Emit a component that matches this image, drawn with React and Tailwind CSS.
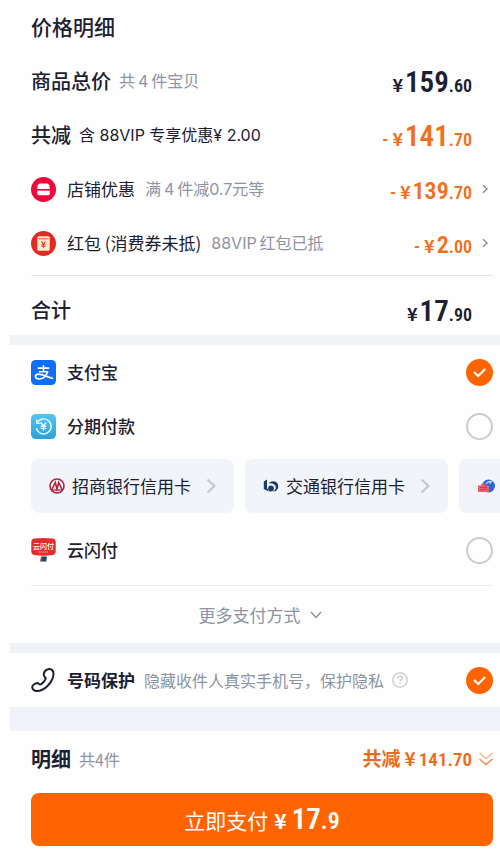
import React, { useState } from 'react';

const YEN = '¥';

const Amount = ({ minus, whole, cents, size }) => {
  const big = size === 'lg' ? 'text-[29px]' : 'text-[24px]';

  return (
    <span className="flex items-baseline pt-[6px] font-['Roboto_Condensed','Roboto',sans-serif] text-[18px] font-semibold leading-8">
      {minus && <span className="mr-1">-</span>}
      <span className="mr-[2px] font-['Noto_Sans_CJK_SC',sans-serif] text-[18px] font-bold leading-none">{YEN}</span>
      <span className={big}>{whole}</span>
      <span>.{cents}</span>
    </span>
  );
};

const Chevron = ({ className }) => (
  <svg viewBox="0 0 10 16" fill="none" stroke="currentColor" strokeWidth="2" className={className}>
    <path d="M1.5 1.5 8.5 8l-7 6.5" />
  </svg>
);

const Check = ({ type, ...props }) => (
  <span className="grid size-[27px] shrink-0">
    <input
      type={type}
      className="peer col-start-1 row-start-1 size-[27px] appearance-none rounded-full border-2 border-[#c9ccd3] checked:border-0 checked:bg-[#ff6400]"
      {...props}
    />
    <svg
      viewBox="0 0 27 27"
      fill="none"
      stroke="white"
      strokeWidth="2.2"
      className="pointer-events-none invisible col-start-1 row-start-1 peer-checked:visible"
    >
      <path d="m8 13 4.200 4 7-7" />
    </svg>
  </span>
);

const ShopIcon = () => (
  <svg viewBox="0 0 24 24" className="size-[25px]">
    <circle cx="12" cy="12" r="12" fill="#f0073c" />
    <path d="M8.5 6.2h7q1.500 0 2 1.800l.7 3.500H5.800L6.500 8q.5-1.800 2-1.800z" fill="#fff" />
    <path d="M6 12.800q1 1 2 0 1 1 2 0 1 1 2 0 1 1 2 0 1 1 2 0 1 1 2 0V16q0 1.500-1.500 1.500h-9Q6 17.500 6 16z" fill="#fff" />
  </svg>
);

const RedPacketIcon = () => (
  <svg viewBox="0 0 24 24" className="size-[25px]">
    <circle cx="12" cy="12" r="12" fill="#e32a22" />
    <rect x="6" y="5" width="12" height="14" rx="1.5" fill="#fde8cd" />
    <path d="M7 7.500h10" stroke="#e5583c" strokeWidth="1" />
    <path d="m10 10 2 2.500 2-2.500M12 12.500V16M10 12.800h4M10 14.500h4" stroke="#dd3b28" strokeWidth="1" fill="none" />
  </svg>
);

const AlipayIcon = () => (
  <svg viewBox="0 0 24 24" className="size-[25px]" fill="none" stroke="#fff">
    <rect width="24" height="24" rx="4.5" fill="#0d6efa" stroke="none" />
    <path d="M6.500 7.800h11M12 5v6M7.500 11.200h9" strokeWidth="1.5" />
    <path d="M16 11.200c-1.400 4-4.500 7-8.200 7-2.200 0-3.500-.9-3.500-2.300s1.300-2.300 3-2.300c3.200 0 7.500 2.400 14 4.200" strokeWidth="1.6" />
  </svg>
);

const InstallmentIcon = () => (
  <svg viewBox="0 0 24 24" className="size-[25px]" fill="none" stroke="#e8f8ff">
    <defs>
      <linearGradient id="sky" x1="0" y1="0" x2="0" y2="1">
        <stop offset="0" stopColor="#55c5ee" />
        <stop offset="1" stopColor="#2f9fdb" />
      </linearGradient>
    </defs>
    <rect width="24" height="24" rx="4.5" fill="url(#sky)" stroke="none" />
    <path d="M6 8.200a7.200 7.200 0 1 1-.8 5.500" strokeWidth="1.4" />
    <path d="M5.500 5v4h4" strokeWidth="1.2" />
    <path d="m9.500 8 2.500 3.500L14.500 8M12 11.500V16M9.300 11.800h5.400M9.300 13.800h5.400" strokeWidth="1.3" />
  </svg>
);

const UnionPayIcon = () => (
  <svg viewBox="0 0 25 24" className="h-6 w-[25px]">
    <path d="M3 .5Q12.500-.5 22 .5q2.500.3 2.700 3V14q-.2 2.500-2.700 3-9.500 1.500-19 0-2.500-.5-2.700-3V3.500Q.5.800 3 .5z" fill="#e52c2d" />
    <text x="12.500" y="11" textAnchor="middle" fill="#fff" fontSize="7" fontWeight="500">云闪付</text>
    <path d="M7.500 14h10" stroke="#fff" strokeWidth="1" strokeDasharray="1.500 .5" opacity=".6" />
    <path d="M10 18.500h2l-.8 5H9z" fill="#d33" />
    <path d="M11.500 18.500h4.500l-.8 5h-4.700z" fill="#174a63" />
  </svg>
);

const PhoneIcon = () => (
  <svg viewBox="0 0 24 24" className="size-6" fill="none" stroke="#1c2030" strokeWidth="2" strokeLinejoin="round">
    <path d="M17 1.300c3-.8 5.500 1 5.500 4.200 0 4.500-2.500 9-6 12.500-3.300 3.200-7 5-10.500 5-3 0-5-2-4.700-4.300.2-1.600 1.500-2.300 3-3 1.800-.9 2.700-.9 3.700.2.800.9 1.500.7 2.500 0 1.600-1.200 2.900-2.700 3.900-4.500.5-1 .4-1.700-.5-2.300-1.300-1-1.300-2.200-1-3.700.5-2.200 2-3.600 4.100-4.100z" />
  </svg>
);

const CmbIcon = () => (
  <svg viewBox="0 0 16 16" className="size-4" fill="none">
    <circle cx="8" cy="8" r="7" stroke="#b5213c" strokeWidth="1.6" />
    <path d="M3 11.500 6.300 4.500 8 11l1.700-6.500 3.300 7" stroke="#b5213c" strokeWidth="1.6" />
    <path d="M2 12h12" stroke="#b5213c" strokeWidth="1.3" />
  </svg>
);

const BocomIcon = () => (
  <svg viewBox="0 0 16 16" className="size-4">
    <path d="M.8 3.500 4 1.500v8.500l2 3.500L.8 11z" fill="#1d3c6b" />
    <path d="M5.500 5.500C9 1.800 15 3 15.300 8c0 2.500-1 4-2.800 5.300h-2.500c2-1 3-2.500 2.800-4.300C12.500 5.800 8.500 4.800 5.500 5.500z" fill="#1d3c6b" />
    <circle cx="8" cy="10.500" r="2.900" fill="#1d3c6b" />
  </svg>
);

const CcbIcon = () => (
  <svg viewBox="0 0 18 16" className="h-4 w-[18px]">
    <circle cx="11.500" cy="8" r="6.500" fill="#2467d8" />
    <path d="M9 6q3-4 6-2M13 3v3" stroke="#dce9fa" strokeWidth="1.2" fill="none" />
    <path d="M1 7.500h2.500L5 5.500h2l1 2h4V14H1z" fill="#ee5d69" />
    <path d="M3 9.500h7M3 11.500h7" stroke="#b33a68" strokeWidth=".8" />
  </svg>
);

const banks = [
  { id: 'cmb', name: '招商银行信用卡', Icon: CmbIcon },
  { id: 'bocom', name: '交通银行信用卡', Icon: BocomIcon },
  { id: 'ccb', name: '', Icon: CcbIcon },
];

const discounts = [
  { name: '店铺优惠', note: '满\u20094\u2009件减0.7元等', whole: '139', cents: '70', Icon: ShopIcon },
  { name: '红包 (消费券未抵)', note: '88VIP\u2009红包已抵', whole: '2', cents: '00', Icon: RedPacketIcon },
];

const PayRow = ({ id, name, Icon, method, setMethod }) => (
  <label className="flex h-[54px] items-center text-[17px] font-medium">
    <span className="w-9"><Icon /></span>
    <span className="flex-1">{name}</span>
    <Check type="radio" name="method" value={id} checked={method === id} onChange={() => setMethod(id)} />
  </label>
);

const App = () => {
  const [method, setMethod] = useState('alipay');
  const [protect, setProtect] = useState(true);

  return (
    <main className="bg-[#fefefe] pl-[10px] font-['Noto_Sans_CJK_SC',sans-serif] text-[#1c2030]">
      {/* Price breakdown */}
      <section className="pr-[7px] pl-[21px]">
        <h1 className="flex h-[54px] items-center text-[21px] font-medium">价格明细</h1>

        <div className="flex h-[54px] items-center pr-[21px]">
          <h2 className="text-[20px] font-medium">商品总价</h2>
          <span className="ml-2 flex-1 font-['Inter','Noto_Sans_CJK_SC',sans-serif] text-[16px] text-[#8d93a3]">{'共\u20094\u2009件宝贝'}</span>
          <Amount size="lg" whole="159" cents="60" />
        </div>

        <div className="flex h-[54px] items-center pr-[21px]">
          <h2 className="text-[20px] font-medium">共减</h2>
          <span className="ml-2 flex-1 font-['Inter','Noto_Sans_CJK_SC',sans-serif] text-[16px]">含 88VIP 专享优惠{YEN} 2.00</span>
          <span className="text-[#f0701c]"><Amount size="lg" minus whole="141" cents="70" /></span>
        </div>

        {discounts.map(({ name, note, whole, cents, Icon }) => (
          <button key={name} type="button" className="flex h-[54px] w-full items-center text-left">
            <span className="w-9"><Icon /></span>
            <span className="text-[17px]">{name}</span>
            <span className="ml-[10px] flex-1 font-['Inter','Noto_Sans_CJK_SC',sans-serif] text-[16px] text-[#8d93a3]">{note}</span>
            <span className="text-[#f0701c]"><Amount minus whole={whole} cents={cents} /></span>
            <span className="flex w-[21px] justify-center pl-1"><Chevron className="h-[10px] w-[6px] text-[#777c88]" /></span>
          </button>
        ))}

        <div className="mt-[5px] flex h-[60px] items-center border-t border-[#e4e6ea] pt-2 pr-[21px]">
          <h2 className="flex-1 text-[20px] font-medium">合计</h2>
          <Amount size="lg" whole="17" cents="90" />
        </div>
      </section>

      <div className="h-[10px] bg-[#f1f3f7]" />

      {/* Payment methods */}
      <section className="pr-[7px] pl-[21px]">
        <PayRow id="alipay" name="支付宝" Icon={AlipayIcon} method={method} setMethod={setMethod} />
        <PayRow id="installment" name="分期付款" Icon={InstallmentIcon} method={method} setMethod={setMethod} />

        <div className="mt-[6px] mr-[-7px] mb-[10px] flex gap-[11px] overflow-hidden">
          {banks.map(({ id, name, Icon }) => (
            <button
              key={id}
              type="button"
              className="flex h-[54px] shrink-0 items-center rounded-lg bg-[#f1f4f8] px-[18px] text-[17px]"
            >
              <Icon />
              <span className="mr-[15px] ml-[7px]">{name}</span>
              <Chevron className="h-4 w-[10px] text-[#c3c7cf]" />
            </button>
          ))}
        </div>

        <PayRow id="unionpay" name="云闪付" Icon={UnionPayIcon} method={method} setMethod={setMethod} />

        <div className="mt-2 border-t border-[#e8eaed]">
          <button type="button" className="flex h-[57px] w-full items-center justify-center gap-[9px] pr-1 text-[17px] text-[#8d93a3]">
            更多支付方式
            <svg viewBox="0 0 12 8" fill="none" stroke="currentColor" strokeWidth="1.5" className="h-2 w-3">
              <path d="m1 1 5 5.500L11 1" />
            </svg>
          </button>
        </div>
      </section>

      <div className="h-[10px] bg-[#f0f4f8]" />

      {/* Number protection */}
      <label className="flex h-[54px] items-center pr-[7px] pl-[21px]">
        <span className="w-9"><PhoneIcon /></span>
        <span className="text-[17px] font-bold">号码保护</span>
        <span className="ml-[9px] text-[16px] text-[#8d93a3]">隐藏收件人真实手机号，保护隐私</span>
        <span className="flex flex-1 pl-2">
          <svg viewBox="0 0 16 16" fill="none" stroke="#c3c6cc" strokeWidth="1.2" className="size-4">
            <circle cx="8" cy="8" r="7.2" />
            <path d="M5.800 6.300c0-3 4.500-2.800 4.500 0 0 1.500-2.200 1.500-2.200 3.200M8.100 10.800v1.200" />
          </svg>
        </span>
        <Check type="checkbox" checked={protect} onChange={() => setProtect(!protect)} />
      </label>

      <div className="h-6 bg-[#f0f4f8]" />

      {/* Footer */}
      <footer className="pr-[7px] pb-[5px] pl-[21px]">
        <div className="flex h-14 items-center">
          <h2 className="text-[20px] font-bold">明细</h2>
          <span className="ml-2 flex-1 text-[16px] text-[#8d93a3]">共4件</span>
          <button type="button" className="flex items-baseline text-[#ec6b1a]">
            <span className="text-[19px] font-bold">共减</span>
            <span className="ml-1 text-[19px] font-bold">{YEN}</span>
            <span className="ml-[3px] font-['Roboto_Condensed','Roboto',sans-serif] text-[19px] font-semibold">141.70</span>
            <svg viewBox="0 0 14 14" fill="none" stroke="#f08a4b" strokeWidth="1.4" className="ml-[7px] size-[14px]">
              <path d="m.5 1 6.500 5.500L13.500 1" opacity=".6" />
              <path d="M.5 7 7 12.500 13.500 7" />
            </svg>
          </button>
        </div>

        <button
          type="button"
          className="mt-[6px] flex h-[53px] w-full items-baseline justify-center rounded-lg bg-[#ff6400] text-[21px] leading-[53px] text-white"
        >
          立即支付
          <span className="ml-[6px] font-bold">{YEN}</span>
          <span className="ml-[5px] font-['Roboto_Condensed','Roboto',sans-serif] text-[29px] font-semibold">17</span>
          <span className="font-['Roboto_Condensed','Roboto',sans-serif] text-[24px] font-semibold">.9</span>
        </button>
      </footer>
    </main>
  );
};

export default App;
